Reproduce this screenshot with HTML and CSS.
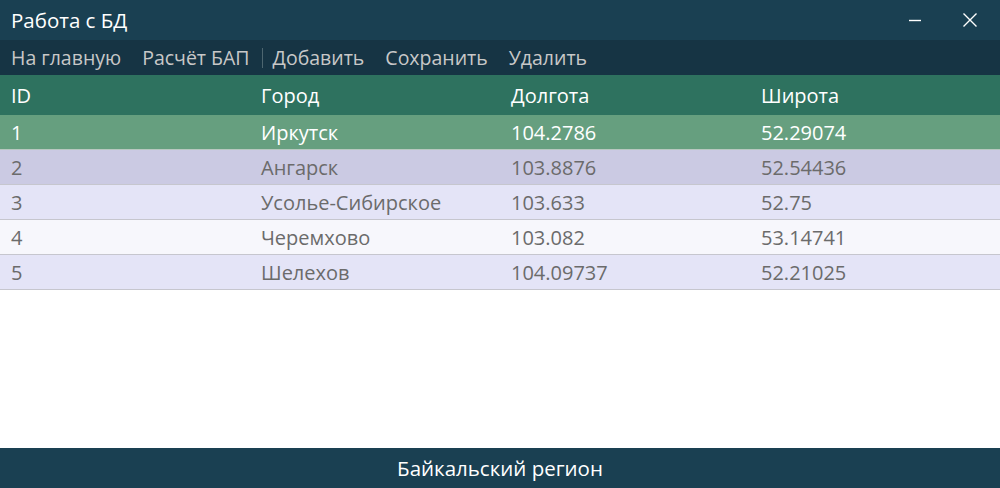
FILE: index.html
```html
<!DOCTYPE html>
<html lang="ru">
<head>
<meta charset="utf-8">
<title>Работа с БД</title>
<link rel="stylesheet" href="styles.css">
</head>
<body>
<div class="window">
  <header class="titlebar">
    <span class="title">Работа с БД</span>
    <div class="controls">
      <span class="ctl">
        <svg width="14" height="14" viewBox="0 0 14 14"><line x1="1" y1="7.5" x2="13" y2="7.5" stroke="#fff" stroke-width="1.4"/></svg>
      </span>
      <span class="ctl">
        <svg width="16" height="16" viewBox="0 0 16 16"><path d="M1.5 1.5 L14.5 14.5 M14.5 1.5 L1.5 14.5" stroke="#fff" stroke-width="1.4"/></svg>
      </span>
    </div>
  </header>
  <nav class="menu">
    <span class="item">На главную</span>
    <span class="item">Расчёт БАП</span>
    <span class="sep"></span>
    <span class="item">Добавить</span>
    <span class="item">Сохранить</span>
    <span class="item">Удалить</span>
  </nav>
  <main class="grid">
    <div class="row head">
      <span>ID</span><span>Город</span><span>Долгота</span><span>Широта</span>
    </div>
    <div class="row selected">
      <span>1</span><span>Иркутск</span><span>104.2786</span><span>52.29074</span>
    </div>
    <div class="row r2">
      <span>2</span><span>Ангарск</span><span>103.8876</span><span>52.54436</span>
    </div>
    <div class="row r3">
      <span>3</span><span>Усолье-Сибирское</span><span>103.633</span><span>52.75</span>
    </div>
    <div class="row r4">
      <span>4</span><span>Черемхово</span><span>103.082</span><span>53.14741</span>
    </div>
    <div class="row r3">
      <span>5</span><span>Шелехов</span><span>104.09737</span><span>52.21025</span>
    </div>
  </main>
  <footer class="status">Байкальский регион</footer>
</div>
</body>
</html>
```

FILE: styles.css
```css
* { box-sizing: border-box; }
html, body { margin: 0; padding: 0; }
body {
  width: 1000px;
  height: 488px;
  overflow: hidden;
  font-family: "Open Sans", "Noto Sans", sans-serif;
  background: #ffffff;
}
.window {
  display: flex;
  flex-direction: column;
  height: 488px;
}
.titlebar {
  height: 40px;
  background: #1a4052;
  color: #ffffff;
  display: flex;
  align-items: center;
  justify-content: space-between;
  padding-left: 11px;
}
.title { font-size: 20.5px; }
.controls { display: flex; height: 100%; }
.ctl {
  width: 60px;
  display: flex;
  align-items: center;
  justify-content: center;
}
.controls .ctl:first-child { width: 50px; }
.menu {
  height: 35px;
  background: #163444;
  color: #c8c8c8;
  display: flex;
  align-items: center;
  padding-left: 11px;
  font-size: 19.5px;
}
.menu .item { margin-right: 21px; }
.menu .item:nth-child(2) { margin-right: 12px; }
.menu .sep {
  width: 1px;
  height: 20px;
  background: #4d6670;
  margin-right: 10px;
}
.grid { flex: 1; display: flex; flex-direction: column; }
.row {
  display: grid;
  grid-template-columns: 250px 250px 250px 250px;
  align-items: center;
  font-size: 20px;
  color: #6b6b6b;
  height: 35px;
  border-bottom: 1px solid #c6c6ce;
}
.row span { padding-left: 11px; }
.row.head {
  height: 40px;
  background: #2e725f;
  color: #ffffff;
  border-bottom: none;
  font-size: 20px;
}
.row.selected {
  background: #669f7f;
  color: #ffffff;
  border-bottom: 1px solid #b8c8c0;
}
.r2 { background: #cbcae3; }
.r3 { background: #e4e4f7; }
.r4 { background: #f7f7fc; }
.status {
  margin-top: auto;
  height: 40px;
  background: #1a4052;
  color: #ffffff;
  display: flex;
  align-items: center;
  justify-content: center;
  font-size: 20.5px;
}
```
